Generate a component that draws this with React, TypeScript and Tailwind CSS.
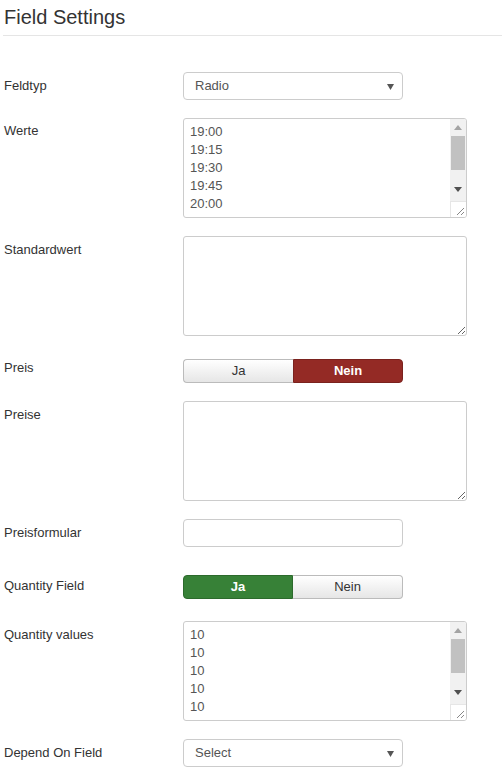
import React from "react";

const font = { fontFamily: '"Liberation Sans", Arial, sans-serif' };

function Label({ text, pt }: { text: string; pt: string }) {
  return (
    <div className={`w-[179px] shrink-0 text-[13px] leading-[18px] text-[#333] ${pt}`}>{text}</div>
  );
}

function Select({ value }: { value: string }) {
  return (
    <div className="relative w-[220px] h-[28px] border border-[#ccc] rounded-[4px] bg-white flex items-center">
      <span className="pl-[11px] text-[13px] text-[#555]">{value}</span>
      <svg className="absolute right-[8px] top-[11px]" width="7" height="6" viewBox="0 0 7 6">
        <path d="M0 0 H7 L3.5 6 Z" fill="#555" />
      </svg>
    </div>
  );
}

function ListBox({ lines }: { lines: string[] }) {
  return (
    <div className="relative w-[284px] h-[100px] border border-[#ccc] rounded-[3px] bg-white overflow-hidden">
      <div className="pl-[6px] pt-[4px] text-[13px] leading-[18px] text-[#555]">
        {lines.map((l, i) => (
          <div key={i}>{l}</div>
        ))}
      </div>
      <div className="absolute right-0 top-0 w-[16px] h-[82px] bg-[#f1f1f1]">
        <svg className="absolute left-[4px] top-[6px]" width="8" height="5" viewBox="0 0 8 5">
          <path d="M0 5 L4 0 L8 5 Z" fill="#a3a3a3" />
        </svg>
        <div className="absolute left-[1px] top-[17px] w-[14px] h-[34px] bg-[#c1c1c1]" />
        <svg className="absolute left-[4px] top-[68px]" width="8" height="5" viewBox="0 0 8 5">
          <path d="M0 0 L8 0 L4 5 Z" fill="#505050" />
        </svg>
      </div>
      <div className="absolute right-0 bottom-0 w-[16px] h-[16px] bg-white border-l border-t border-[#e6e6e6]">
        <svg className="absolute right-[2px] bottom-[2px]" width="8" height="8" viewBox="0 0 8 8">
          <path d="M8 1 L1 8 M8 5 L5 8" stroke="#888" strokeWidth="1" />
        </svg>
      </div>
    </div>
  );
}

function Area() {
  return (
    <textarea
      readOnly
      className="block w-[284px] h-[100px] border border-[#ccc] rounded-[3px] bg-white outline-none"
    />
  );
}

function Toggle({ active }: { active: "ja-green" | "nein-red" }) {
  const base = "h-[24px] flex items-center justify-center text-[13px]";
  const neutral = "bg-gradient-to-b from-[#ffffff] to-[#e6e6e6] text-[#333] border border-[#bbb]";
  return (
    <div className="flex w-[220px]">
      {active === "ja-green" ? (
        <>
          <div className={`${base} w-[110px] bg-[#378137] text-white font-bold rounded-l-[4px] border border-[#2c6a2c]`}>Ja</div>
          <div className={`${base} w-[110px] ${neutral} border-l-0 rounded-r-[4px]`}>Nein</div>
        </>
      ) : (
        <>
          <div className={`${base} w-[110px] ${neutral} border-r-0 rounded-l-[4px]`}>Ja</div>
          <div className={`${base} w-[110px] bg-[#942a25] text-white font-bold rounded-r-[4px] border border-[#7a221e]`}>Nein</div>
        </>
      )}
    </div>
  );
}

export default function App() {
  return (
    <div className="w-[502px] min-h-[779px] bg-white" style={font}>
      <div className="ml-[3px] border-b border-[#e5e5e5] pb-[8px] pt-[7px]">
        <h2 className="pl-[1px] text-[20px] leading-[20px] text-[#333]">Field Settings</h2>
      </div>
      <div className="pl-[4px]">
        <div className="flex mt-[36px]">
          <Label text="Feldtyp" pt="pt-[5px]" />
          <Select value="Radio" />
        </div>
        <div className="flex mt-[18px]">
          <Label text="Werte" pt="pt-[4px]" />
          <ListBox lines={["19:00", "19:15", "19:30", "19:45", "20:00", "20:15"]} />
        </div>
        <div className="flex mt-[18px]">
          <Label text="Standardwert" pt="pt-[5px]" />
          <Area />
        </div>
        <div className="flex mt-[23px]">
          <Label text="Preis" pt="pt-[0px]" />
          <Toggle active="nein-red" />
        </div>
        <div className="flex mt-[18px]">
          <Label text="Preise" pt="pt-[5px]" />
          <Area />
        </div>
        <div className="flex mt-[18px]">
          <Label text="Preisformular" pt="pt-[5px]" />
          <div className="w-[220px] h-[28px] border border-[#ccc] rounded-[4px] bg-white" />
        </div>
        <div className="flex mt-[28px]">
          <Label text="Quantity Field" pt="pt-[2px]" />
          <Toggle active="ja-green" />
        </div>
        <div className="flex mt-[22px]">
          <Label text="Quantity values" pt="pt-[5px]" />
          <ListBox lines={["10", "10", "10", "10", "10", "10"]} />
        </div>
        <div className="flex mt-[18px]">
          <Label text="Depend On Field" pt="pt-[5px]" />
          <Select value="Select" />
        </div>
      </div>
    </div>
  );
}
